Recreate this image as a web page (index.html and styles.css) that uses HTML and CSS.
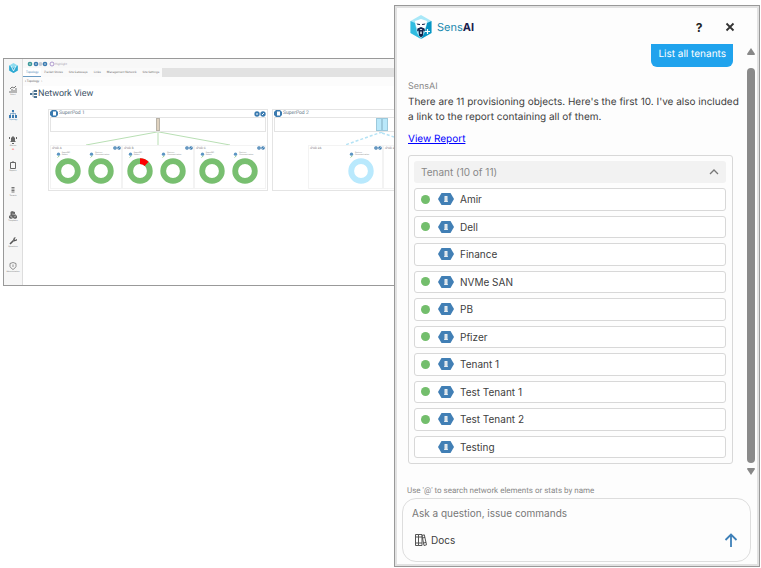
FILE: index.html
```html
<!DOCTYPE html>
<html lang="en">
<head>
<meta charset="utf-8">
<title>Network View – SensAI</title>
<link rel="stylesheet" href="styles.css">
</head>
<body>
<svg class="defs" aria-hidden="true">
  <symbol id="logo" viewBox="0 0 22 24">
    <path fill="#a9e8f8" d="M11 0 21.500 6v12L11 24 .5 18V6z"/>
    <path fill="#31bce0" d="M.5 6 5 8l2 10 4 6L.5 18z"/>
    <path fill="#0795c4" d="M21.500 6 17 8l-2 9-4 7 10.500-6z"/>
    <path fill="#fff" d="M5 6l6-2 6 2-1 5-1.500 3h-7L6 11z"/>
    <path fill="#12234b" d="M6.500 8.500l3.500.5v1L7.500 9.700zM15.500 8.500L12 9v1l2.500-.3zM7.500 13.500l3.500-1.500 3.500 1.500.5 3-1.500-1-.5 5-2 2-2-2-.5-5-1.500 1z"/>
    <path fill="#fff" d="M9.500 14h3L11 15.200zM10.300 16.500h1.400v2.500h-1.400z"/>
    <path stroke="#fff" stroke-width="1.200" d="M17.500 14v5M15 16.500h5"/>
  </symbol>
  <symbol id="app-logo" viewBox="0 0 22 24">
    <path fill="#8fdcf0" d="M11 0 21.500 6v12L11 24 .5 18V6z"/>
    <path fill="#2fa9d2" d="M.5 6 11 12v12L.5 18zM11 12l10.500-6v12L11 24z"/>
    <path stroke="#fff" stroke-width="2" fill="none" d="M5 7l6 12 6-12"/>
  </symbol>
  <symbol id="tenant" viewBox="0 0 16 12">
    <path fill="#417fb5" d="M3.500 0h9L16 6l-3.500 6h-9L0 6z"/>
    <path fill="#e9eef2" d="M6.500 3h3v6h-3zM6 8.300h4V9H6z"/>
    <path stroke="#b9c9d5" stroke-width=".5" d="M6.500 5h3M6.500 7h3"/>
  </symbol>
  <symbol id="donut" viewBox="0 0 26 26">
    <circle cx="13" cy="13" r="9.800" fill="none" stroke="currentColor" stroke-width="5.800"/>
  </symbol>
  <symbol id="donut-alert" viewBox="0 0 26 26">
    <circle cx="13" cy="13" r="9.800" fill="none" stroke="currentColor" stroke-width="5.800"/>
    <path d="M13 3.200A9.800 9.800 0 0 1 19.600 5.800" fill="none" stroke="#f00" stroke-width="5.800"/>
  </symbol>
  <symbol id="tools" viewBox="0 0 12 6">
    <circle cx="3" cy="3" r="2.700" fill="#3b7bb0"/><circle cx="9" cy="3" r="2.700" fill="#3b7bb0"/>
    <path d="M2 3h2M8 4l2-2" stroke="#fff" stroke-width="1"/>
  </symbol>
  <symbol id="probe" viewBox="0 0 6 6">
    <circle cx="3" cy="2" r="2" fill="#5b95c3"/><path d="M2 6l2-2" stroke="#78c071"/>
  </symbol>
  <symbol id="pod" viewBox="0 0 8 7">
    <path d="M2 0h4l2 2v3L6 7H2L0 5V2z" fill="#3b7bb0"/><path d="M3 1.500h3v4H3z" fill="#fff"/>
  </symbol>
</svg>

<main class="app">
  <nav class="rail" aria-label="Main">
    <a class="rail-item brand" href="#" aria-label="Home"><svg><use href="#app-logo"/></svg></a>
    <a class="rail-item" href="#"><svg viewBox="0 0 8 8" fill="none" stroke="#777"><path d="M1 8V6M3 8V4M5 8V5M7 8V3M1 4l2-2 2 1 2-2"/></svg>Select</a>
    <a class="rail-item current" href="#"><svg viewBox="0 0 8 8" fill="#3b7bb0"><path d="M3 0h2v2H3zM0 5h2v3H0zM3 5h2v3H3zM6 5h2v3H6zM1 5V3.500h6V5h-.5V4h-5v1zM3.800 2h.5v3h-.5z"/></svg>Topology</a>
    <a class="rail-item" href="#"><svg viewBox="0 0 8 8" fill="#666"><path d="M4 0l2 2v3l1 1H1l1-1V2zM3 7h2v1H3zM0 1h1v2H0zM7 1h1v2H7z"/></svg>Alarms<span class="count">99</span></a>
    <a class="rail-item" href="#"><svg viewBox="0 0 8 8" fill="none" stroke="#666"><path d="M1.500 1.500h5v6h-5zM3 1h2"/></svg>Reports</a>
    <a class="rail-item" href="#"><svg viewBox="0 0 8 8" stroke="#777"><path d="M2.500 1.500h3M2.500 3h3M2.500 4.500h3M2.500 6h3"/></svg>Tenants</a>
    <a class="rail-item" href="#"><svg viewBox="0 0 8 8" fill="#666"><path d="M3 0l3 1v2l2 2v2L6 8 4 7 2 8 0 7V5l1.500-1V1z"/><path stroke="#eee" stroke-width=".5" d="M1 5l2 1v1M5 6l2-1M3 3l3 .5"/></svg>Templates</a>
    <a class="rail-item" href="#"><svg viewBox="0 0 8 8"><path d="M1 7l3.500-3.500" stroke="#555" stroke-width="1.600"/><path d="M5 .5L4 3l1 1.500 3-1V2L6 3 5.500 2 7 .5z" fill="#555"/></svg>Operations</a>
    <a class="rail-item" href="#"><svg viewBox="0 0 8 8" fill="none" stroke="#666" stroke-width=".7"><path d="M4 .5l3 1v3Q6 6.500 4 7.500 2 6.500 1 4.500v-3zM4 2.500v2.500"/></svg>Administration</a>
  </nav>

  <section class="workspace">
    <div class="toolbar">
      <svg viewBox="0 0 28 6" aria-hidden="true"><g fill="#3b7bb0"><circle cx="3" cy="3" r="2.300" fill="#3a9999"/><circle cx="9" cy="3" r="2.300"/><circle cx="13.500" cy="3" r="2" fill="#c5cbd4"/><circle cx="18" cy="3" r="2.300"/></g><path d="M8 3h2M17 3h2M2 3h2" stroke="#fff" stroke-width=".7"/><circle cx="25" cy="3" r="2" fill="none" stroke="#9c83c4" stroke-width=".8"/></svg>
      <span>Highlight</span>
    </div>
    <div class="tabs">
      <a class="tab current" href="#">Topology</a><a class="tab" href="#">Packet Stores</a><a class="tab" href="#">Site Gateways</a><a class="tab" href="#">Links</a><a class="tab" href="#">Management Network</a><a class="tab" href="#">Site Settings</a>
    </div>
    <div class="crumbs">▪ Topology &nbsp; ›</div>
    <h1><svg viewBox="0 0 7 8" aria-hidden="true"><path d="M4 0h3v2H4zM4 3h3v2H4zM4 6h3v2H4zM0 3h2v2H0z" fill="#48708f"/><path d="M4 1H3v6h1M2 4h2" fill="none" stroke="#48708f" stroke-width=".6"/></svg>Network View</h1>

    <div class="canvas">
      <article class="superpod">
        <header><svg class="pod-icon"><use href="#pod"/></svg><h2>SuperPod 1</h2><svg class="tools"><use href="#tools"/></svg></header>
        <div class="spine"><span class="device"></span></div>
        <svg class="links" viewBox="0 0 216 13" preserveAspectRatio="none"><path d="M107 0L36 13M108 0v13M109 0l71 13" stroke="#b9dfb4" fill="none"/></svg>
        <div class="pods">
          <section class="pod"><h3><b>▪</b> POD A<svg class="tools"><use href="#tools"/></svg></h3>
            <div class="charts"><figure><figcaption><svg><use href="#probe"/></svg>SuperNIC<br>Status</figcaption><svg class="donut"><use href="#donut"/></svg></figure><figure><figcaption><svg><use href="#probe"/></svg>Devices<br>Communication</figcaption><svg class="donut"><use href="#donut"/></svg></figure></div></section>
          <section class="pod"><h3><b>▪</b> POD B<svg class="tools"><use href="#tools"/></svg></h3>
            <div class="charts"><figure><figcaption><svg><use href="#probe"/></svg>SuperNIC<br>Status</figcaption><svg class="donut"><use href="#donut-alert"/></svg></figure><figure><figcaption><svg><use href="#probe"/></svg>Devices<br>Communication</figcaption><svg class="donut"><use href="#donut"/></svg></figure></div></section>
          <section class="pod"><h3><b>▪</b> POD C<svg class="tools"><use href="#tools"/></svg></h3>
            <div class="charts"><figure><figcaption><svg><use href="#probe"/></svg>SuperNIC<br>Status</figcaption><svg class="donut"><use href="#donut"/></svg></figure><figure><figcaption><svg><use href="#probe"/></svg>Devices<br>Communication</figcaption><svg class="donut"><use href="#donut"/></svg></figure></div></section>
        </div>
      </article>

      <article class="superpod inactive">
        <header><svg class="pod-icon"><use href="#pod"/></svg><h2>SuperPod 2</h2></header>
        <div class="spine"><span class="device"></span><span class="device"></span></div>
        <svg class="links" viewBox="0 0 216 13"><path d="M108 0L71 13M108 1l12 4" stroke="#b5e3f5" stroke-width="1.500" stroke-dasharray="3 2" fill="none"/></svg>
        <div class="pods">
          <section class="pod"><h3><b>▪</b> POD 2A<svg class="tools"><use href="#tools"/></svg></h3>
            <div class="charts"><figure><figcaption><svg><use href="#probe"/></svg>Devices<br>Communication</figcaption><svg class="donut"><use href="#donut"/></svg></figure></div></section>
          <section class="pod"><h3><b>▪</b> POD 2</h3></section>
        </div>
      </article>
    </div>
  </section>
</main>

<aside class="chat" aria-label="SensAI assistant">
  <header class="chat-head">
    <svg class="chat-logo" aria-hidden="true"><use href="#logo"/></svg>
    <span class="chat-name">Sens<b>AI</b></span>
    <button class="icon-btn" type="button" aria-label="Help">?</button>
    <button class="icon-btn" type="button" aria-label="Close"><svg viewBox="0 0 10 10"><path d="M1.500 1.500l7 7M8.500 1.500l-7 7" stroke="#333" stroke-width="1.800"/></svg></button>
  </header>

  <div class="scroller">
    <div class="log">
      <p class="bubble">List all tenants</p>
      <p class="author">SensAI</p>
      <p class="reply">There are 11 provisioning objects. Here's the first 10. I've also included<br>a link to the report containing all of them.</p>
      <a class="report" href="#">View Report</a>
      <section class="card">
        <button class="card-head" type="button">Tenant (10 of 11)<svg viewBox="0 0 10 6"><path d="M1 5l4-4 4 4" fill="none" stroke="#777" stroke-width="1.300"/></svg></button>
        <button class="row" type="button"><i class="dot"></i><svg><use href="#tenant"/></svg>Amir</button>
        <button class="row" type="button"><i class="dot"></i><svg><use href="#tenant"/></svg>Dell</button>
        <button class="row" type="button"><i class="dot off"></i><svg><use href="#tenant"/></svg>Finance</button>
        <button class="row" type="button"><i class="dot"></i><svg><use href="#tenant"/></svg>NVMe SAN</button>
        <button class="row" type="button"><i class="dot"></i><svg><use href="#tenant"/></svg>PB</button>
        <button class="row" type="button"><i class="dot"></i><svg><use href="#tenant"/></svg>Pfizer</button>
        <button class="row" type="button"><i class="dot"></i><svg><use href="#tenant"/></svg>Tenant 1</button>
        <button class="row" type="button"><i class="dot"></i><svg><use href="#tenant"/></svg>Test Tenant 1</button>
        <button class="row" type="button"><i class="dot"></i><svg><use href="#tenant"/></svg>Test Tenant 2</button>
        <button class="row" type="button"><i class="dot off"></i><svg><use href="#tenant"/></svg>Testing</button>
      </section>
    </div>
    <div class="bar" aria-hidden="true">
      <svg viewBox="0 0 8 7"><path d="M4 0l4 6q0 1-1 1H1Q0 7 0 6z" fill="#888"/></svg>
      <span class="thumb"></span>
      <svg viewBox="0 0 8 7"><path d="M4 7l4-6q0-1-1-1H1Q0 0 0 1z" fill="#888"/></svg>
    </div>
  </div>

  <label class="hint" for="ask">Use '@' to search network elements or stats by name</label>
  <form class="composer">
    <input id="ask" type="text" placeholder="Ask a question, issue commands">
    <div class="composer-actions">
      <button class="docs" type="button"><svg viewBox="0 0 12 12" fill="none" stroke="#555"><path d="M.5 .5h3v11h-3zM3.500 .5h3.500v11H3.500zM7 1.500l2.300-.7 2.200 10-2.500.7zM.5 3h6.500M.5 9h6.500M7.500 4l2.500-.6M8.500 9l2.500-.6"/></svg>Docs</button>
      <button class="send" type="button" aria-label="Send"><svg viewBox="0 0 14 14"><path d="M7 14V1.500M1.500 7L7 1.500 12.500 7" fill="none" stroke="#3e80b8" stroke-width="1.800"/></svg></button>
    </div>
  </form>
</aside>
</body>
</html>
```
FILE: styles.css
```css
* { box-sizing: border-box; }
body {
  margin: 0;
  min-height: 100vh;
  padding: 5px 1px 1px 3px;
  display: flex;
  background: #fff;
  color: #404040;
  font-family: Inter, "Liberation Sans", sans-serif;
  font-size: 10px;
  text-rendering: geometricPrecision;
}
h1, h2, h3, p, figure { margin: 0; font-weight: 400; }
svg { display: block; flex: none; }
a { color: inherit; text-decoration: none; }
button { border: 0; padding: 0; background: none; color: inherit; font: inherit; }
.defs { position: absolute; width: 0; height: 0; }

/* Application window */
.app {
  flex: 1;
  min-width: 0;
  align-self: flex-start;
  margin-top: 53px;
  display: flex;
  border: 1px solid #999;
  border-right: 0;
  overflow: hidden;
  background: #fff;
  font-family: Roboto, "Liberation Sans", sans-serif;
}
.rail {
  flex: none;
  width: 19px;
  background: #f6f6f6;
  border-right: 1px solid #ddd;
  display: grid;
  grid-template-rows: 22px;
  grid-auto-rows: 1fr;
  height: 226px;
  padding-top: 2px;
}
.rail-item {
  display: flex;
  flex-direction: column;
  align-items: center;
  padding-top: 2px;
  gap: 1px;
  font-size: 2px;
  line-height: 3px;
  color: #777;
}
.rail-item svg { width: 8px; height: 8px; }
.rail-item.brand svg { width: 9px; height: 10px; }
.rail-item.current { color: #3b7bb0; }
.count { color: #f33; }
.workspace { flex: 1; min-width: 0; font-size: 3px; }
.toolbar {
  height: 9px;
  background: #f8f8f8;
  display: flex;
  align-items: center;
  padding-left: 4px;
  color: #a6a0b0;
}
.toolbar svg { width: 28px; height: 6px; }
.tabs { height: 9px; display: flex; background: #e2e2e2; }
.tab {
  background: #fafafa;
  padding: 0 3px;
  line-height: 9px;
  color: #777;
}
.tab.current { background: #fff; color: #3b7bb0; border-bottom: 1px solid #6a9cc4; }
.crumbs { height: 9px; line-height: 9px; padding-left: 2px; background: #fcfcfc; color: #555; }
h1 {
  display: flex;
  align-items: center;
  gap: 1px;
  padding: 1px 0 0 7px;
  font-size: 9px;
  line-height: 14px;
  color: #3d5368;
}
h1 svg { width: 7px; height: 8px; }
.canvas { display: flex; gap: 4px; padding: 8px 0 0 25px; }
.superpod { flex: none; width: 220px; height: 82px; border: 1px solid #e4e4e4; padding: 0 1px; }
.superpod header { height: 7px; display: flex; align-items: center; gap: 1px; }
h2 { flex: 1; font-size: 5px; line-height: 7px; color: #68798a; }
.pod-icon { width: 8px; height: 7px; }
.tools { width: 12px; height: 6px; }
.spine { height: 15px; border: 1px solid #e4e4e4; display: flex; justify-content: center; }
.device { width: 4px; height: 13px; background: #dfd2bf; border: 1px solid #b9b3a8; }
.inactive .device { width: 6px; background: #b9e8fa; border-color: #9cc9dc; }
.links { width: 216px; height: 13px; }
.pods { display: flex; }
.pod { width: 72px; height: 44px; border: 1px solid #f3f3f3; }
h3 { display: flex; font-size: 3px; line-height: 5px; color: #777; padding-left: 1px; }
h3 .tools { width: 8px; height: 4px; margin-left: auto; }
.charts { display: flex; justify-content: space-around; padding-right: 3px; color: #78bf70; }
figcaption { display: flex; gap: 1px; font-size: 2px; line-height: 2px; color: #888; padding-left: 1px; height: 6px; }
figcaption svg { width: 5px; height: 6px; }
figure { width: 26px; padding-top: 1px; }
.donut { width: 26px; height: 26px; }
.inactive { overflow: hidden; }
.inactive .pods { padding-left: 34px; }
.inactive .pod { width: 75px; flex: none; }
.inactive .charts { color: #b9e9fd; justify-content: flex-end; padding-right: 8px; }

/* Assistant panel */
.chat {
  flex: none;
  width: 366px;
  display: flex;
  flex-direction: column;
  border: 1px solid #999;
  box-shadow: inset 0 0 0 2px #e2e2e2;
  background: #fdfdfd;
  padding: 6px 3px 4px;
}
.chat-head { display: flex; align-items: center; height: 32px; padding: 0 20px 2px 12px; }
.chat-logo { width: 22px; height: 24px; }
.chat-name { flex: 1; margin-left: 5px; font-size: 11px; color: #1788ae; }
.chat-name b { color: #1b1c4c; }
.icon-btn { width: 12px; font-size: 12px; font-weight: 700; color: #222; }
.icon-btn + .icon-btn { margin-left: 19px; }
.icon-btn svg { width: 10px; height: 10px; margin: auto; }
.scroller { flex: 1; display: flex; min-height: 0; }
.log { flex: 1; min-width: 0; display: flex; flex-direction: column; padding: 0 14px 15px 10px; }
.bubble {
  align-self: flex-end;
  background: #20a3ed;
  color: #fff;
  padding: 3px 7px 5px;
  line-height: 15px;
  border-radius: 0 0 6px 6px;
}
.author { margin-top: 12px; font-size: 9px; line-height: 15px; color: #888; }
.reply { line-height: 15px; margin-top: 1px; white-space: nowrap; }
.report { align-self: flex-start; margin: 7px 0 8px; line-height: 15px; color: #00f; text-decoration: underline; }
.card {
  flex: 1;
  display: grid;
  grid-template-rows: 22px;
  grid-auto-rows: 1fr;
  gap: 5px;
  padding: 5px 6px 5px 5px;
  border: 1px solid #d8d8d8;
  border-radius: 3px;
}
.card-head {
  display: flex;
  align-items: center;
  justify-content: space-between;
  padding: 0 7px;
  background: #f2f2f2;
  border-radius: 3px;
  color: #888;
}
.card-head svg { width: 10px; height: 6px; }
.row {
  display: flex;
  align-items: center;
  padding-left: 6px;
  border: 1px solid #d8d8d8;
  border-radius: 3px;
  background: #fff;
}
.row svg { width: 16px; height: 12px; margin: 0 6px 0 8px; }
.dot { width: 9px; height: 9px; border-radius: 50%; background: #73be6c; }
.dot.off { visibility: hidden; }
.bar { width: 8px; margin: 4px 1px 4px 0; display: flex; flex-direction: column; gap: 5px; }
.bar svg { width: 8px; height: 7px; }
.thumb { flex: 1; margin-top: 8px; border-radius: 4px; background: #8a8a8a; }
.hint { margin: 6px 0 1px 9px; font-family: Roboto, "Liberation Sans", sans-serif; font-size: 8px; line-height: 12px; color: #888; }
.composer { margin: 0 5px 0 4px; border: 1px solid #ddd; border-radius: 14px; padding: 5px 12px 9px 9px; }
.composer input { display: block; width: 100%; height: 18px; border: 0; padding: 0; background: none; outline: 0; font: inherit; }
.composer input::placeholder { color: #777; opacity: 1; }
.composer-actions { display: flex; justify-content: space-between; align-items: center; margin-top: 6px; padding-left: 3px; height: 24px; }
.docs { display: flex; align-items: center; gap: 4px; }
.docs svg { width: 12px; height: 12px; }
.send svg { width: 14px; height: 14px; }
```
